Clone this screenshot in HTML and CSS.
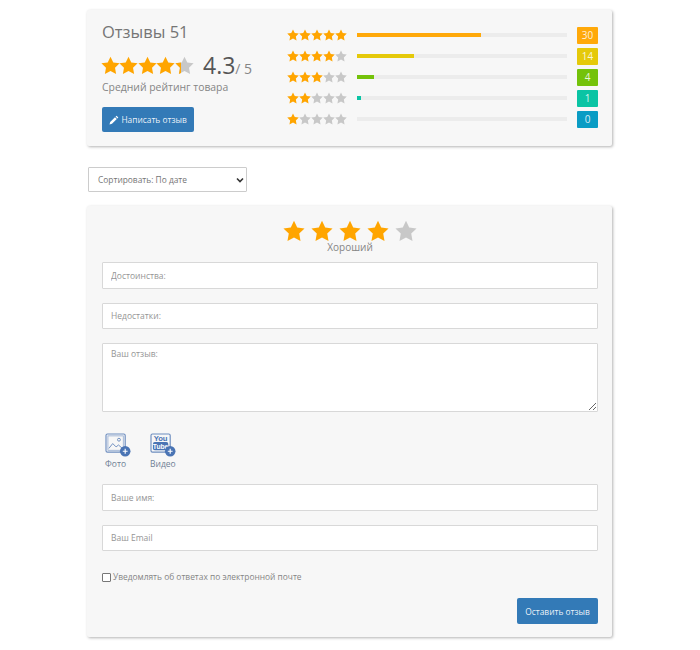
FILE: index.html
```html
<!DOCTYPE html>
<html lang="ru">
<head>
    <meta charset="UTF-8">
    <title>Отзывы</title>
    <link rel="stylesheet" href="styles.css">
</head>
<body>
    <svg class="sprite" width="0" height="0">
        <symbol id="star" viewBox="0 0 24 24">
            <path d="M12 .8l3.500 7.300 8 1.100-5.800 5.600 1.400 8L12 19l-7.100 3.800 1.400-8L.5 9.200l8-1.100z"/>
        </symbol>
    </svg>

    <div class="wrap">
        <section class="card summary">
            <div class="summary-left">
                <h2 class="title">Отзывы 51</h2>
                <div class="avg">
                    <div class="stars stars-big">
                        <svg class="on"><use href="#star"/></svg>
                        <svg class="on"><use href="#star"/></svg>
                        <svg class="on"><use href="#star"/></svg>
                        <svg class="on"><use href="#star"/></svg>
                        <span class="part">
                            <svg class="off"><use href="#star"/></svg>
                            <span class="part-fill"><svg class="on"><use href="#star"/></svg></span>
                        </span>
                    </div>
                    <span class="avg-num">4.3</span><span class="avg-max">/ 5</span>
                </div>
                <div class="avg-label">Средний рейтинг товара</div>
                <button class="btn btn-write">
                    <svg class="pencil" viewBox="0 0 12 12"><path d="M9 .8l2.200 2.200-1.100 1.100-2.200-2.200zM7.200 2.600l2.200 2.200-5.800 5.800-3 .8.800-3z"/></svg>
                    Написать отзыв
                </button>
            </div>
            <div class="bars">
                <div class="bar-row">
                    <div class="stars stars-small">
                        <svg class="on"><use href="#star"/></svg><svg class="on"><use href="#star"/></svg><svg class="on"><use href="#star"/></svg><svg class="on"><use href="#star"/></svg><svg class="on"><use href="#star"/></svg>
                    </div>
                    <div class="track"><div class="fill c-orange" style="width: 59%"></div></div>
                    <span class="count c-orange">30</span>
                </div>
                <div class="bar-row">
                    <div class="stars stars-small">
                        <svg class="on"><use href="#star"/></svg><svg class="on"><use href="#star"/></svg><svg class="on"><use href="#star"/></svg><svg class="on"><use href="#star"/></svg><svg class="off"><use href="#star"/></svg>
                    </div>
                    <div class="track"><div class="fill c-yellow" style="width: 27%"></div></div>
                    <span class="count c-yellow">14</span>
                </div>
                <div class="bar-row">
                    <div class="stars stars-small">
                        <svg class="on"><use href="#star"/></svg><svg class="on"><use href="#star"/></svg><svg class="on"><use href="#star"/></svg><svg class="off"><use href="#star"/></svg><svg class="off"><use href="#star"/></svg>
                    </div>
                    <div class="track"><div class="fill c-green" style="width: 8%"></div></div>
                    <span class="count c-green">4</span>
                </div>
                <div class="bar-row">
                    <div class="stars stars-small">
                        <svg class="on"><use href="#star"/></svg><svg class="on"><use href="#star"/></svg><svg class="off"><use href="#star"/></svg><svg class="off"><use href="#star"/></svg><svg class="off"><use href="#star"/></svg>
                    </div>
                    <div class="track"><div class="fill c-teal" style="width: 2%"></div></div>
                    <span class="count c-teal">1</span>
                </div>
                <div class="bar-row">
                    <div class="stars stars-small">
                        <svg class="on"><use href="#star"/></svg><svg class="off"><use href="#star"/></svg><svg class="off"><use href="#star"/></svg><svg class="off"><use href="#star"/></svg><svg class="off"><use href="#star"/></svg>
                    </div>
                    <div class="track"></div>
                    <span class="count c-blue">0</span>
                </div>
            </div>
        </section>

        <div class="sort-wrap">
            <select class="sort">
                <option>Сортировать: По дате</option>
            </select>
            <svg class="sort-arrow" viewBox="0 0 8 6"><path d="M1 1.500l3 3 3-3" fill="none" stroke="#333" stroke-width="1.600"/></svg>
        </div>

        <form class="card review">
            <div class="stars stars-pick">
                <svg class="on"><use href="#star"/></svg>
                <svg class="on"><use href="#star"/></svg>
                <svg class="on"><use href="#star"/></svg>
                <svg class="on"><use href="#star"/></svg>
                <svg class="off"><use href="#star"/></svg>
            </div>
            <div class="pick-label">Хороший</div>

            <input class="field" type="text" placeholder="Достоинства:">
            <input class="field" type="text" placeholder="Недостатки:">
            <textarea class="field area" placeholder="Ваш отзыв:"></textarea>

            <div class="uploads">
                <div class="upload">
                    <svg class="upload-icon" viewBox="0 0 27 25">
                        <rect x="1" y="1" width="20" height="19" rx="1.500" fill="#f7f7f7" stroke="#6d8dbf" stroke-width="1.200"/>
                        <rect x="3" y="3" width="16" height="15" fill="none" stroke="#8fa8cf" stroke-width=".8"/>
                        <path d="M4 16l4-5 3.500 3.500 2.500-2 4 3.500" fill="none" stroke="#6d8dbf" stroke-width="1"/>
                        <circle cx="14.500" cy="7" r="1.500" fill="none" stroke="#6d8dbf"/>
                        <circle cx="21" cy="19" r="5.500" fill="#4a74b4"/>
                        <path d="M21 16.500v5M18.500 19h5" stroke="#fff" stroke-width="1.200"/>
                    </svg>
                    <span>Фото</span>
                </div>
                <div class="upload">
                    <svg class="upload-icon" viewBox="0 0 27 25">
                        <rect x="1" y="1" width="20" height="19" rx="1.500" fill="#f7f7f7" stroke="#6d8dbf" stroke-width="1.200"/>
                        <text x="11" y="8.500" class="yt-you">You</text>
                        <rect x="3" y="9.500" width="16" height="8.500" rx="2" fill="#4a74b4"/>
                        <text x="11" y="16.200" class="yt-tube">Tube</text>
                        <circle cx="21" cy="19" r="5.500" fill="#4a74b4"/>
                        <path d="M21 16.500v5M18.500 19h5" stroke="#fff" stroke-width="1.200"/>
                    </svg>
                    <span>Видео</span>
                </div>
            </div>

            <input class="field" type="text" placeholder="Ваше имя:">
            <input class="field" type="text" placeholder="Ваш Email">

            <label class="notify">
                <input type="checkbox">
                <span>Уведомлять об ответах по электронной почте</span>
            </label>

            <div class="submit-row">
                <button class="btn btn-send" type="button">Оставить отзыв</button>
            </div>
        </form>
    </div>
</body>
</html>
```

FILE: styles.css
```css
body {
    margin: 0;
    background-color: white;
    color: #858585;
    font-family: 'Open Sans', sans-serif;
    font-size: 12px;
}
.sprite {
    position: absolute;
}
.wrap {
    width: 525px;
    margin-left: 87px;
    padding: 10px 0 13px;
}
.card {
    background-color: #f7f7f7;
    box-shadow: 1px 1px 3px rgba(0, 0, 0, 0.3);
    border-radius: 2px;
    box-sizing: border-box;
}

/* stars */
.stars {
    display: flex;
}
.stars svg {
    display: block;
}
.on {
    fill: #ffa500;
}
.off {
    fill: #c8c8c8;
}
.stars-big svg {
    width: 19px;
    height: 19px;
}
.stars-big svg,
.part {
    margin-right: -0.6px;
}
.part {
    position: relative;
    width: 19px;
    height: 19px;
}
.part-fill {
    position: absolute;
    left: 0;
    top: 0;
    width: 6px;
    height: 19px;
    overflow: hidden;
}
.part svg {
    margin-right: 0;
}
.stars-small svg {
    width: 12px;
    height: 12px;
}
.stars-small {
    width: 60px;
    flex-shrink: 0;
}
.stars-pick {
    justify-content: center;
    gap: 6px;
}
.stars-pick svg {
    width: 22px;
    height: 22px;
}

/* summary */
.summary {
    height: 136px;
    display: flex;
    padding: 12px 14px 0 15px;
}
.summary-left {
    width: 185px;
    flex-shrink: 0;
}
.title {
    margin: 0;
    font-size: 16.5px;
    font-weight: 400;
    line-height: 20px;
    color: #757575;
}
.avg {
    display: flex;
    align-items: baseline;
    margin-top: 9px;
    height: 28px;
}
.avg .stars {
    align-self: center;
    width: 92px;
    margin-left: -1px;
}
.avg-num {
    margin-left: 10px;
    font-size: 23px;
    line-height: 28px;
    color: #555;
}
.avg-max {
    font-size: 14px;
    color: #858585;
}
.avg-label {
    font-size: 10.4px;
    line-height: 16px;
}
.btn {
    display: block;
    border: none;
    border-radius: 2px;
    background-color: #337ab7;
    color: rgba(255, 255, 255, 0.92);
    font-family: 'Open Sans', sans-serif;
    font-size: 8.4px;
    padding: 0;
}
.btn-write {
    margin-top: 12px;
    width: 92px;
    height: 25px;
}
.pencil {
    width: 10px;
    height: 10px;
    fill: white;
    vertical-align: -2px;
}

/* bars */
.bars {
    flex: 1;
    display: flex;
    flex-direction: column;
    gap: 4px;
    padding-top: 4.5px;
}
.bar-row {
    display: flex;
    align-items: center;
    height: 17px;
}
.track {
    width: 210px;
    height: 4px;
    margin-left: 10px;
    background-color: #ececec;
}
.fill {
    height: 100%;
}
.count {
    margin-left: 10px;
    width: 21px;
    height: 17px;
    border-radius: 1px;
    color: rgba(255, 255, 255, 0.85);
    font-size: 10px;
    line-height: 17px;
    text-align: center;
}
.c-orange { background-color: #ffa90a; }
.c-yellow { background-color: #e5c90a; }
.c-green { background-color: #74c20a; }
.c-teal { background-color: #0ac4a4; }
.c-blue { background-color: #0a9cc4; }

/* sort */
.sort-wrap {
    position: relative;
    width: 159px;
    margin: 21px 0 14px 1px;
}
.sort {
    display: block;
    appearance: none;
    box-sizing: border-box;
    width: 100%;
    height: 25px;
    padding-left: 9px;
    background-color: white;
    border: 1px solid #ccc;
    border-radius: 1px;
    color: #757575;
    font-family: 'Open Sans', sans-serif;
    font-size: 8.4px;
}
.sort-arrow {
    position: absolute;
    right: 3px;
    top: 10px;
    width: 8px;
    height: 6px;
}

/* review form */
.review {
    height: 431px;
    padding: 14px 14px 0 15px;
}
.pick-label {
    text-align: center;
    font-size: 10px;
    line-height: 12px;
    margin-top: -1px;
    margin-bottom: 9px;
}
.field {
    display: block;
    box-sizing: border-box;
    width: 100%;
    height: 26.5px;
    margin-bottom: 14px;
    padding: 0 8px;
    background-color: white;
    border: 1px solid #d8d8d8;
    border-radius: 1px;
    font-family: 'Open Sans', sans-serif;
    font-size: 8.5px;
}
.field::placeholder {
    color: #959595;
}
.area {
    height: 69px;
    padding-top: 4px;
    margin-bottom: 21px;
}
.uploads {
    display: flex;
    gap: 19px;
    margin-bottom: 15px;
    padding-left: 3px;
}
.upload {
    display: flex;
    flex-direction: column;
    align-items: flex-start;
    font-size: 8.5px;
    line-height: 10px;
    color: #6f7f95;
}
.upload-icon {
    width: 26px;
    height: 24px;
    margin-bottom: 2px;
}
.yt-you {
    fill: #4a74b4;
    font-family: 'Liberation Sans', sans-serif;
    font-size: 8px;
    font-weight: 700;
    text-anchor: middle;
}
.yt-tube {
    fill: white;
    font-family: 'Liberation Sans', sans-serif;
    font-size: 7px;
    font-weight: 700;
    text-anchor: middle;
}
.notify {
    display: flex;
    align-items: center;
    gap: 2px;
    margin-top: 20px;
    font-size: 8.4px;
    line-height: 12px;
}
.notify input {
    appearance: none;
    box-sizing: border-box;
    margin: 0;
    width: 9px;
    height: 9px;
    background-color: white;
    border: 1px solid #777;
    border-radius: 1px;
}
.submit-row {
    display: flex;
    justify-content: flex-end;
    margin-top: 15px;
}
.btn-send {
    width: 81px;
    height: 26px;
}
```
